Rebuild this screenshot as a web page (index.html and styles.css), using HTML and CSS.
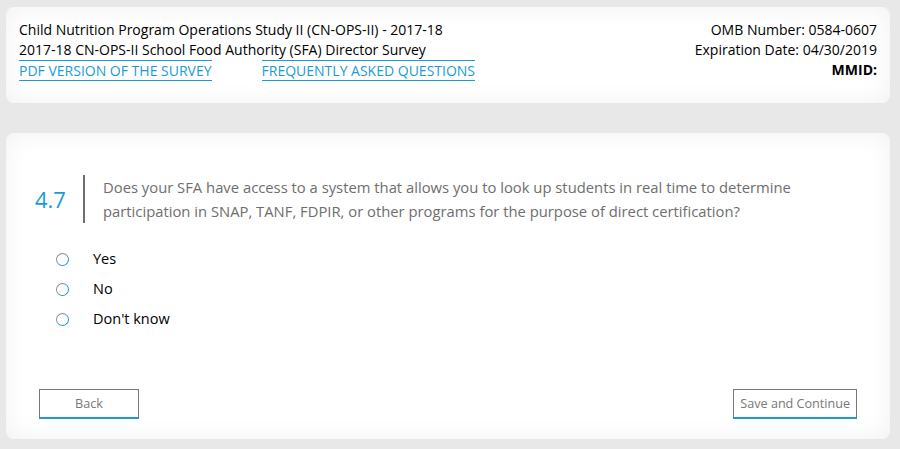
FILE: index.html
```html
<!DOCTYPE html>
<html lang="en">
<head>
  <meta charset="UTF-8">
  <title>CN-OPS-II SFA Director Survey</title>
  <link rel="stylesheet" href="styles.css">
</head>
<body>

  <header class="card header">
    <div class="study">
      <div>Child Nutrition Program Operations Study II (CN-OPS-II) - 2017-18</div>
      <div>2017-18 CN-OPS-II School Food Authority (SFA) Director Survey</div>
      <div class="links">
        <a href="#">PDF VERSION OF THE SURVEY</a>
        <a href="#">FREQUENTLY ASKED QUESTIONS</a>
      </div>
    </div>
    <div class="omb">
      <div>OMB Number: 0584-0607</div>
      <div>Expiration Date: 04/30/2019</div>
      <div class="mmid">MMID:</div>
    </div>
  </header>

  <div class="card survey">
    <div class="question">
      <div class="qnum">4.7</div>
      <div class="qtext">Does your SFA have access to a system that allows you to look up students in real time to determine participation in SNAP, TANF, FDPIR, or other programs for the purpose of direct certification?</div>
    </div>

    <ul class="answers">
      <li><label><input type="radio" name="q47"><span class="dot"></span>Yes</label></li>
      <li><label><input type="radio" name="q47"><span class="dot"></span>No</label></li>
      <li><label><input type="radio" name="q47"><span class="dot"></span>Don't know</label></li>
    </ul>

    <div class="actions">
      <button class="back">Back</button>
      <button class="next">Save and Continue</button>
    </div>
  </div>

</body>
</html>
```

FILE: styles.css
```css
body {
  font-family: "Open Sans", Arial, sans-serif;
  background: #e8e8e8;
  color: #000;
  margin: 0;
  padding: 7px 10px 0 6px;
}

.card {
  background: #fff;
  border-radius: 8px;
  box-shadow: inset 0 0 24px rgba(0,0,0,0.06);
}

.header {
  display: flex;
  justify-content: space-between;
  padding: 13px 13px 0 13px;
  height: 83px;
  font-size: 14px;
  line-height: 20px;
}

.links {
  display: flex;
  gap: 50px;
}

.links a {
  color: #1a9bd7;
  text-decoration: none;
  border-top: 1px solid #1a9bd7;
  border-bottom: 1px solid #1a9bd7;
  line-height: 19px;
}

.omb {
  text-align: right;
}

.mmid {
  font-weight: bold;
}

.survey {
  margin-top: 30px;
  padding: 42px 33px 20px 33px;
}

.question {
  display: flex;
  align-items: center;
}

.qnum {
  flex: none;
  color: #1a9bd7;
  font-size: 22px;
  width: 48px;
  margin-left: -4px;
}

.qtext {
  color: #6e6e6e;
  font-size: 14.8px;
  line-height: 24px;
  border-left: 2px solid #6e6e6e;
  padding-left: 18px;
  max-width: 760px;
}

.answers {
  list-style: none;
  margin: 21px 0 0 0;
  padding: 0;
}

.answers li {
  line-height: 30px;
  font-size: 14.5px;
}

.answers label {
  display: flex;
  align-items: center;
  cursor: pointer;
}

.answers input {
  display: none;
}

.dot {
  width: 11px;
  height: 11px;
  border-radius: 50%;
  border: 1px solid;
  border-color: #8a8a8a #1a9bd7 #1a9bd7 #8a8a8a;
  margin: 0 24px 0 17px;
}

.actions {
  display: flex;
  justify-content: space-between;
  margin-top: 55px;
}

button {
  font-family: inherit;
  font-size: 12.6px;
  color: #777;
  background: #fff;
  border: 1px solid #777;
  border-bottom: 2px solid #1a9bd7;
  height: 30px;
  padding: 0 6px;
  cursor: pointer;
}

.back {
  width: 100px;
}
```
